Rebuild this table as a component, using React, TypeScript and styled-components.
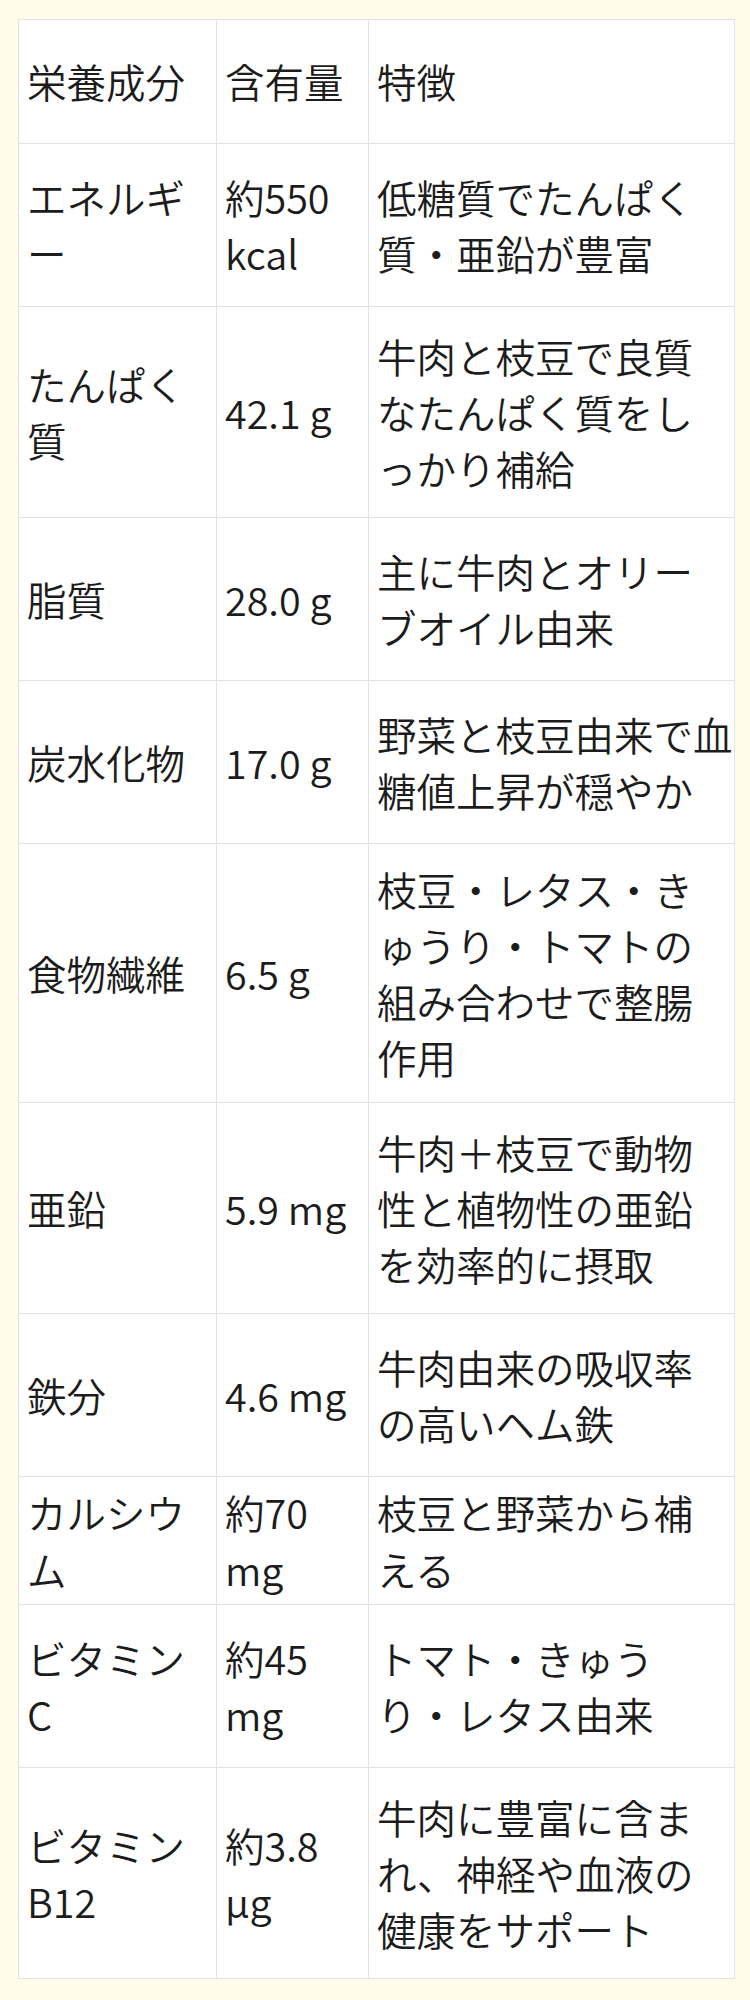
import React, { Fragment } from "react";
import styled, { createGlobalStyle } from "styled-components";

const GlobalStyle = createGlobalStyle`
  html, body {
    margin: 0;
    padding: 0;
    background: #fffcec;
  }
  body {
    font-family: "Noto Sans CJK JP", "Noto Sans", sans-serif;
    color: #1c1c1c;
  }
`;

const Page = styled.div`
  padding: 19px 16px 24px 18px;
  min-height: 2000px;
  box-sizing: border-box;
`;

const Table = styled.table`
  width: 716px;
  table-layout: fixed;
  border-collapse: collapse;
  background: #ffffff;
  font-family: "Noto Sans CJK JP", "Noto Sans", sans-serif;
  font-size: 39.5px;
  line-height: 1.42;
`;

const Row = styled.tr<{ $h: number }>`
  height: ${(p) => p.$h}px;
`;

const cellCss = `
  border: 1px solid #e2e2e2;
  padding: 0 8px;
  vertical-align: middle;
  text-align: left;
  font-weight: 350;
  white-space: nowrap;
`;

const HeadCell = styled.th`
  ${cellCss}
`;

const Cell = styled.td`
  ${cellCss}
`;

type Line = string[];
type RowData = { h: number; name: Line; amount: Line; note: Line };

const header = { h: 124, cols: ["栄養成分", "含有量", "特徴"] };

const rows: RowData[] = [
  { h: 163, name: ["エネルギ", "ー"], amount: ["約550", "kcal"], note: ["低糖質でたんぱく", "質・亜鉛が豊富"] },
  { h: 211, name: ["たんぱく", "質"], amount: ["42.1 g"], note: ["牛肉と枝豆で良質", "なたんぱく質をし", "っかり補給"] },
  { h: 163, name: ["脂質"], amount: ["28.0 g"], note: ["主に牛肉とオリー", "ブオイル由来"] },
  { h: 163, name: ["炭水化物"], amount: ["17.0 g"], note: ["野菜と枝豆由来で血", "糖値上昇が穏やか"] },
  { h: 259, name: ["食物繊維"], amount: ["6.5 g"], note: ["枝豆・レタス・き", "ゅうり・トマトの", "組み合わせで整腸", "作用"] },
  { h: 211, name: ["亜鉛"], amount: ["5.9 mg"], note: ["牛肉＋枝豆で動物", "性と植物性の亜鉛", "を効率的に摂取"] },
  { h: 163, name: ["鉄分"], amount: ["4.6 mg"], note: ["牛肉由来の吸収率", "の高いヘム鉄"] },
  { h: 128, name: ["カルシウ", "ム"], amount: ["約70", "mg"], note: ["枝豆と野菜から補", "える"] },
  { h: 163, name: ["ビタミン", "C"], amount: ["約45", "mg"], note: ["トマト・きゅう", "り・レタス由来"] },
  { h: 211, name: ["ビタミン", "B12"], amount: ["約3.8", "μg"], note: ["牛肉に豊富に含ま", "れ、神経や血液の", "健康をサポート"] },
];

const Lines: React.FC<{ lines: Line }> = ({ lines }) => (
  <>
    {lines.map((l, i) => (
      <Fragment key={i}>
        {i > 0 && <br />}
        {l}
      </Fragment>
    ))}
  </>
);

export default function App() {
  return (
    <>
      <GlobalStyle />
      <Page>
        <Table>
          <colgroup>
            <col style={{ width: 198 }} />
            <col style={{ width: 152 }} />
            <col style={{ width: 366 }} />
          </colgroup>
          <thead>
            <Row $h={header.h}>
              {header.cols.map((c) => (
                <HeadCell key={c}>{c}</HeadCell>
              ))}
            </Row>
          </thead>
          <tbody>
            {rows.map((r, i) => (
              <Row key={i} $h={r.h}>
                <Cell>
                  <Lines lines={r.name} />
                </Cell>
                <Cell>
                  <Lines lines={r.amount} />
                </Cell>
                <Cell>
                  <Lines lines={r.note} />
                </Cell>
              </Row>
            ))}
          </tbody>
        </Table>
      </Page>
    </>
  );
}
